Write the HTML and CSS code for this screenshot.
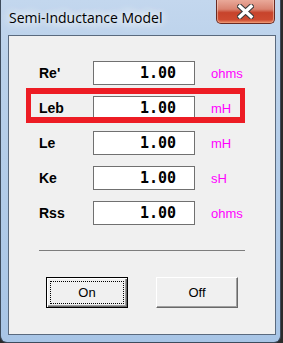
FILE: index.html
```html
<!DOCTYPE html>
<html lang="en">

<head>
    <meta charset="UTF-8">
    <meta name="viewport" content="width=device-width, initial-scale=1.0">
    <title>Semi-Inductance Model</title>
    <link rel="stylesheet" href="styles.css">
</head>

<body>

    <div class="window">
        <div class="titlebar">
            <span class="title">Semi-Inductance Model</span>
            <button class="close-btn" title="Close">
                <svg width="17" height="15" viewBox="0 0 17 15">
                    <path d="M3 2.5 L14 12.5 M14 2.5 L3 12.5" stroke="#3b3b3b" stroke-width="5.6" stroke-linecap="square" fill="none" />
                    <path d="M3 2.5 L14 12.5 M14 2.5 L3 12.5" stroke="#ffffff" stroke-width="3.4" stroke-linecap="square" fill="none" />
                </svg>
            </button>
        </div>

        <div class="client">
            <div class="fields">
                <span class="label">Re'</span>
                <div class="value">1.00</div>
                <span class="unit">ohms</span>

                <span class="label">Leb</span>
                <div class="value">1.00</div>
                <span class="unit">mH</span>

                <span class="label">Le</span>
                <div class="value">1.00</div>
                <span class="unit">mH</span>

                <span class="label">Ke</span>
                <div class="value">1.00</div>
                <span class="unit">sH</span>

                <span class="label">Rss</span>
                <div class="value">1.00</div>
                <span class="unit">ohms</span>
            </div>

            <div class="separator"></div>

            <div class="buttons">
                <button class="btn btn-default">On</button>
                <button class="btn">Off</button>
            </div>

            <div class="highlight"></div>
        </div>
    </div>

</body>

</html>
```

FILE: styles.css
```css
body {
    margin: 0;
    width: 283px;
    height: 343px;
    background-color: #2b2b2b;
    font-family: "Liberation Sans", Arial, sans-serif;
    overflow: hidden;
}

.window {
    width: 281px;
    height: 343px;
    box-sizing: border-box;
    border: 1px solid #3d4b5c;
    border-top: none;
    border-radius: 0 0 7px 7px;
    padding: 0 4px 7px 7px;
    background: linear-gradient(to bottom, #c3d7ee 0, #bad1ea 60px, #a8c5e6 100%);
}

.titlebar {
    display: flex;
    align-items: flex-start;
    height: 35px;
    margin: 0 -4px 0 -7px;
    padding-left: 8px;
}

.title {
    font-family: "Open Sans", "Noto Sans", sans-serif;
    font-size: 14px;
    line-height: 19px;
    margin-top: 8px;
    color: #000;
    text-shadow: 0 0 8px #fff, 0 0 12px #fff, 0 0 16px rgba(255, 255, 255, 0.8);
}

.close-btn {
    margin-left: auto;
    margin-right: 5px;
    width: 59px;
    height: 24px;
    padding: 0;
    border: 1px solid #6b2a22;
    border-top: none;
    border-radius: 0 0 5px 5px;
    background: linear-gradient(to bottom, #e9a99a 0, #d98370 40%, #c7432b 55%, #cd4a30 85%, #e07757 100%);
    box-shadow: inset 0 -1px 2px rgba(255, 190, 150, 0.6), inset 1px 0 0 rgba(255, 255, 255, 0.35), inset -1px 0 0 rgba(255, 255, 255, 0.35);
    display: flex;
    align-items: center;
    justify-content: center;
}

.close-btn svg {
    display: block;
    margin-top: -1px;
}

.client {
    position: relative;
    height: 300px;
    box-sizing: border-box;
    border: 1px solid #5a6a7e;
    background-color: #f0f0f0;
    padding: 25px 0 0 30px;
}

.fields {
    display: grid;
    grid-template-columns: 54px 102px auto;
    grid-auto-rows: 24px;
    row-gap: 11px;
    align-items: center;
}

.label {
    font-size: 14px;
    font-weight: bold;
    color: #000;
}

.value {
    height: 24px;
    box-sizing: border-box;
    border: 1px solid #707070;
    background-color: #fff;
    text-align: right;
    padding-right: 18px;
    font-family: "DejaVu Sans Mono", "Liberation Mono", monospace;
    font-weight: bold;
    font-size: 15px;
    line-height: 22px;
    color: #000;
}

.unit {
    font-size: 13px;
    color: #ff00ff;
    padding-left: 16px;
}

.separator {
    width: 206px;
    height: 0;
    margin-top: 25px;
    border-top: 1px solid #7d7d7d;
}

.buttons {
    display: flex;
    gap: 28px;
    margin-top: 26px;
    padding-left: 7px;
}

.btn {
    position: relative;
    width: 82px;
    height: 31px;
    padding: 0;
    box-sizing: border-box;
    font-family: "Liberation Sans", Arial, sans-serif;
    font-size: 13px;
    color: #000;
    background-color: #f0f0f0;
    border: 1px solid;
    border-color: #ffffff #696969 #696969 #ffffff;
    box-shadow: inset -1px -1px 0 #a0a0a0;
}

.btn-default {
    border-color: #000;
    box-shadow: inset 1px 1px 0 #fff, inset -1px -1px 0 #696969, inset -2px -2px 0 #a0a0a0;
}

.btn-default::after {
    content: "";
    position: absolute;
    left: 3px;
    top: 3px;
    right: 3px;
    bottom: 3px;
    border: 1px dotted #000;
}

.highlight {
    position: absolute;
    left: 17px;
    top: 52px;
    width: 219px;
    height: 35px;
    box-sizing: border-box;
    border: 6px solid #ed1c24;
    border-left-width: 5px;
    border-right-width: 5px;
}
```
